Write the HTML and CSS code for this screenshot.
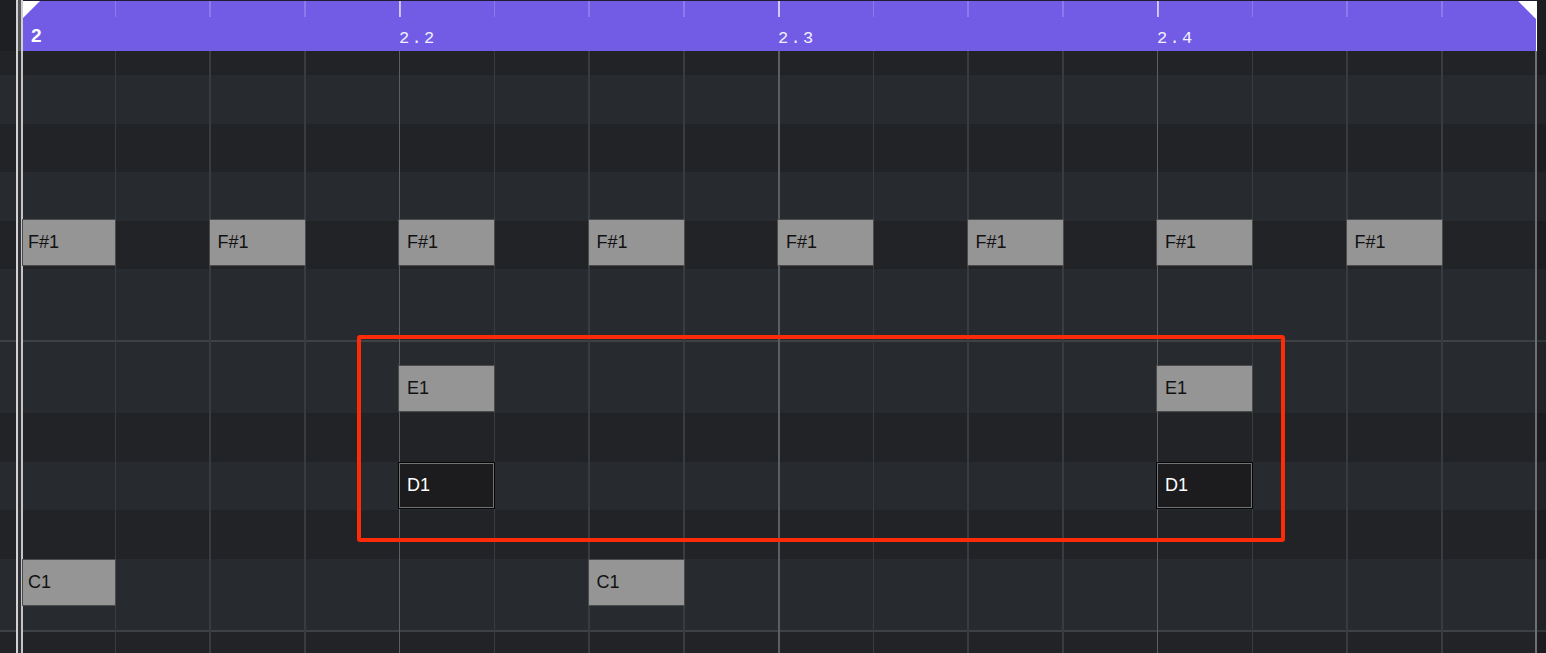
FILE: index.html
```html
<!DOCTYPE html>
<html lang="en">
<head>
    <meta charset="UTF-8">
    <meta name="viewport" content="width=device-width, initial-scale=1.0">
    <title>Piano roll</title>

    <link rel="stylesheet" href="styles.css">
</head>
<body>
    <div class="editor">
        <!-- timeline ruler -->
        <div class="ruler">
            <div class="ruler-gutter"></div>
            <div class="ruler-bar">
                <div class="ruler-fill">
                    <span class="ruler-cell bar">2</span>
                    <span class="ruler-cell">2.2</span>
                    <span class="ruler-cell">2.3</span>
                    <span class="ruler-cell">2.4</span>
                </div>
            </div>
            <div class="ruler-end"></div>
        </div>

        <!-- note lanes -->
        <div class="roll">
            <div class="lanes">
                <div class="band black half"></div>
                <div class="band"></div>
                <div class="band black"></div>
                <div class="band"></div>
                <div class="band black"></div>
                <div class="band wide"></div>
                <div class="rule"></div>
                <div class="band wide"></div>
                <div class="band black"></div>
                <div class="band"></div>
                <div class="band black"></div>
                <div class="band wide"></div>
                <div class="rule"></div>
                <div class="band black tail"></div>
            </div>

            <div class="grid-lines"></div>
            <div class="gutter"></div>

            <div class="notes">
                <div class="note fs s1">F#1</div>
                <div class="note fs s3">F#1</div>
                <div class="note fs s5">F#1</div>
                <div class="note fs s7">F#1</div>
                <div class="note fs s9">F#1</div>
                <div class="note fs s11">F#1</div>
                <div class="note fs s13">F#1</div>
                <div class="note fs s15">F#1</div>

                <div class="note e s5">E1</div>
                <div class="note e s13">E1</div>

                <div class="note d s5 selected">D1</div>
                <div class="note d s13 selected">D1</div>

                <div class="note c s1">C1</div>
                <div class="note c s7">C1</div>
            </div>

            <div class="edge"></div>
            <div class="selection"></div>
        </div>
    </div>
</body>
</html>
```

FILE: styles.css
```css
body {
    margin: 0;
    background: #1e1f22;
    font-family: "Liberation Sans", Arial, Helvetica, sans-serif;
    overflow: hidden;
}

.editor {
    width: 1546px;
    height: 653px;
}

/* ---------- ruler ---------- */
.ruler {
    display: flex;
    height: 51px;
}

.ruler-gutter {
    width: 23px;
    background: linear-gradient(90deg, #1e1f22 0 16px, #d2d2d4 16px 18px, #55575b 18px 21px, #d0d0d0 21px 23px);
}

.ruler-bar {
    width: 1514px;
    box-sizing: border-box;
    padding-right: 1px;
    background: #fff;
    border-top: 1px solid #201d33;
}

.ruler-fill {
    display: flex;
    height: 50px;
    background-color: #735ce5;
    background-image:
        repeating-linear-gradient(90deg, rgba(255, 255, 255, 0.6) 0 2px, transparent 2px 379px),
        repeating-linear-gradient(90deg, rgba(255, 255, 255, 0.18) 0 1.5px, transparent 1.5px 94.75px);
    background-size: 100% 16px;
    background-repeat: repeat-x;
    background-position: -3px 0;
    clip-path: polygon(17px 0, calc(100% - 18px) 0, 100% 18px, 100% 100%, 0 100%, 0 17px);
}

.ruler-cell {
    width: 379px;
    box-sizing: border-box;
    padding-top: 29px;
    font: 17px/1 "Liberation Mono", "DejaVu Sans Mono", monospace;
    letter-spacing: 2.3px;
    color: #f2efff;
}

.ruler-cell.bar {
    width: 376px;
    padding: 25px 0 0 8px;
    font: bold 19px/1 "Liberation Sans", Arial, sans-serif;
    letter-spacing: 0;
    color: #fff;
}

.ruler-end {
    flex: 1;
    background: #1e1f22;
}

/* ---------- roll ---------- */
.roll {
    position: relative;
    display: grid;
    grid-template-columns: 1546px;
    grid-template-rows: 602px;
}

.roll > * {
    grid-area: 1 / 1;
}

.lanes {
    display: flex;
    flex-direction: column;
}

.band {
    flex: none;
    height: 48.5px;
    background: #272a2e;
}

.band.black { background: #222326; }
.band.half { height: 24px; }
.band.wide { height: 71px; }
.band.tail { flex: 1; }

.rule {
    flex: none;
    height: 2px;
    background: #3e4145;
}

.grid-lines {
    margin-left: 20px;
    width: 1517px;
    background-image:
        linear-gradient(90deg, transparent 1515px, #6d6f73 1515px),
        repeating-linear-gradient(90deg, #5b5e62 0 1.5px, transparent 1.5px 379px),
        repeating-linear-gradient(90deg, #383b3f 0 1.5px, transparent 1.5px 94.75px);
}

.gutter {
    justify-self: start;
    width: 23px;
    background: linear-gradient(90deg, transparent 16px, #d2d2d4 16px 18px, #303236 18px 21px, #c4c4c4 21px 23px);
}

.edge {
    justify-self: end;
    width: 9px;
    background: rgba(0, 0, 0, 0.15);
}

/* ---------- notes ---------- */
.notes {
    display: grid;
    grid-template-columns: repeat(16, 94.75px);
    grid-template-rows: repeat(8, 48.5px);
    align-content: start;
    justify-content: start;
    padding: 168px 0 0 20px;
}

.note {
    display: flex;
    align-items: center;
    box-sizing: border-box;
    width: 97px;
    height: 47px;
    margin-left: -1px;
    padding-left: 8px;
    background: #959595;
    border: 1px solid #4b4b4b;
    color: #111;
    font-size: 18px;
}

.note.selected {
    background: #1c1c1e;
    border-color: #060606;
    box-shadow: inset 0 0 0 1px #737373;
    color: #fff;
}

/* pitch rows */
.fs { grid-row: 1; }
.e  { grid-row: 4; }
.d  { grid-row: 6; }
.c  { grid-row: 8; }

/* sixteenth steps */
.s1  { grid-column: 1; margin-left: 2px; width: 94px; padding-left: 5px; }
.s3  { grid-column: 3; }
.s5  { grid-column: 5; }
.s7  { grid-column: 7; }
.s9  { grid-column: 9; }
.s11 { grid-column: 11; }
.s13 { grid-column: 13; }
.s15 { grid-column: 15; }

/* highlight */
.selection {
    position: absolute;
    left: 357px;
    top: 284px;
    width: 928px;
    height: 207px;
    box-sizing: border-box;
    border: 4px solid #fd2b08;
    border-radius: 3px;
}
```
